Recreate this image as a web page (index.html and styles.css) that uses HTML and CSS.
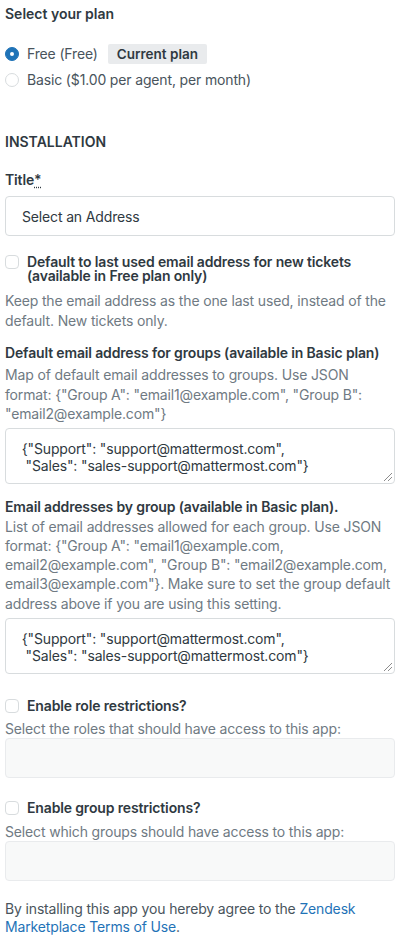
FILE: index.html
```html
<!DOCTYPE html>
<html>
<head>
<meta charset="utf-8">
<link rel="stylesheet" href="styles.css">
</head>
<body>
<div class="page">
  <div class="heading">Select your plan</div>
  <div class="plans">
    <div class="plan">
      <span class="radio checked"></span>
      <span class="plan-name">Free (Free)</span>
      <span class="badge">Current plan</span>
    </div>
    <div class="plan">
      <span class="radio"></span>
      <span class="plan-name">Basic ($1.00 per agent, per month)</span>
    </div>
  </div>

  <div class="section">INSTALLATION</div>

  <div class="field-label title-label">Title<span class="req">*</span></div>
  <div class="input">Select an Address</div>

  <div class="check-row two-line">
    <span class="checkbox"></span>
    <span class="check-label">Default to last used email address for new tickets (available in Free plan only)</span>
  </div>
  <div class="hint hint-a">Keep the email address as the one last used, instead of the default. New tickets only.</div>

  <div class="field-label label-b">Default email address for groups (available in Basic plan)</div>
  <div class="hint hint-b">Map of default email addresses to groups. Use JSON format: {"Group A": "email1@example.com", "Group B": "email2@example.com"}</div>
  <div class="textarea ta-b"><div class="ta-text"> {"Support": "support@mattermost.com",
  "Sales": "sales-support@mattermost.com"}</div><span class="grip"></span></div>

  <div class="field-label label-c">Email addresses by group (available in Basic plan).</div>
  <div class="hint hint-c">List of email addresses allowed for each group. Use JSON format: {"Group A": "email1@example.com, email2@example.com", "Group B": "email2@example.com, email3@example.com"}. Make sure to set the group default address above if you are using this setting.</div>
  <div class="textarea ta-c"><div class="ta-text"> {"Support": "support@mattermost.com",
  "Sales": "sales-support@mattermost.com"}</div><span class="grip"></span></div>

  <div class="check-row role-row">
    <span class="checkbox"></span>
    <span class="check-label">Enable role restrictions?</span>
  </div>
  <div class="hint small-hint">Select the roles that should have access to this app:</div>
  <div class="disabled-box"></div>

  <div class="check-row group-row">
    <span class="checkbox"></span>
    <span class="check-label">Enable group restrictions?</span>
  </div>
  <div class="hint small-hint group-hint">Select which groups should have access to this app:</div>
  <div class="disabled-box"></div>

  <div class="footer">By installing this app you hereby agree to the <a class="link" href="#">Zendesk Marketplace Terms of Use</a>.</div>
</div>
</body>
</html>
```

FILE: styles.css
```css
* { box-sizing: border-box; }
html, body { margin: 0; padding: 0; background: #fff; }
body {
  font-family: Inter, "Noto Sans", "Liberation Sans", sans-serif;
  font-size: 14px;
  letter-spacing: -0.15px;
  color: #2f3941;
  -webkit-font-smoothing: antialiased;
}
.page { padding: 4px 9px 0 5px; width: 404px; }

.heading { font-weight: 600; line-height: 20px; color: #2f3941; letter-spacing: 0; }

.plans { margin-top: 17px; }
.plan { display: flex; align-items: center; height: 26px; }
.radio {
  width: 14px; height: 14px; border-radius: 50%;
  border: 1px solid #d8dcde; background: #fff;
  margin-right: 8px; flex: none;
  display: inline-flex; align-items: center; justify-content: center;
}
.radio.checked { background: #1f73b7; border-color: #1f73b7; }
.radio.checked::after { content: ""; width: 4px; height: 4px; border-radius: 50%; background: #fff; }
.plan-name { color: #49545c; line-height: 20px; }
.badge {
  margin-left: 10px; background: #e9ebed; color: #2f3941;
  font-weight: 600; font-size: 13.5px; line-height: 20px;
  padding: 0 9px; border-radius: 2px; letter-spacing: 0;
}

.section { margin-top: 39px; font-weight: 600; line-height: 20px; color: #2f3941; letter-spacing: 0; }

.field-label { font-weight: 600; line-height: 20px; color: #2f3941; }
.title-label { margin-top: 18px; }
.req { text-decoration: underline dotted; text-underline-offset: 2px; }

.input {
  margin-top: 6px; height: 40px; border: 1px solid #d8dcde; border-radius: 4px;
  padding: 0 16px; display: flex; align-items: center; color: #2f3941;
}

.check-row { display: flex; align-items: flex-start; }
.checkbox {
  width: 14px; height: 14px; border: 1px solid #d8dcde; border-radius: 4px;
  background: #fff; flex: none; margin-right: 8px;
}
.check-label { font-weight: 600; color: #2f3941; }
.two-line { margin-top: 19px; }
.two-line .check-label { line-height: 14px; }

.hint { color: #6f7a83; }
.hint-a { margin-top: 8px; line-height: 20px; }
.label-b { margin-top: 12px; }
.hint-b { margin-top: 2px; line-height: 19.5px; }

.textarea {
  position: relative; height: 56px; border: 1px solid #d8dcde; border-radius: 4px;
  padding: 11px 12px 0 12px; color: #2f3941;
}
.ta-text { white-space: pre; line-height: 17px; }
.ta-b { margin-top: 4px; }
.grip {
  position: absolute; right: 2px; bottom: 2px; width: 8px; height: 8px;
  background: linear-gradient(135deg, transparent 45%, #8c8c8c 45%, #8c8c8c 52%, transparent 52%, transparent 70%, #8c8c8c 70%, #8c8c8c 77%, transparent 77%);
}

.label-c { margin-top: 13px; }
.hint-c { line-height: 19.3px; }
.ta-c { margin-top: 5px; }

.role-row { margin-top: 22px; align-items: center; }
.role-row .check-label, .group-row .check-label { line-height: 20px; }
.small-hint { margin-top: 4px; line-height: 18px; }
.disabled-box { height: 40px; border: 1px solid #e9ebed; border-radius: 4px; background: #f8f9f9; }
.group-row { margin-top: 20px; align-items: center; }
.group-hint { margin-top: 5px; }

.footer { margin-top: 19px; line-height: 18px; color: #49545c; }
.link { color: #1f73b7; text-decoration: none; }
```
